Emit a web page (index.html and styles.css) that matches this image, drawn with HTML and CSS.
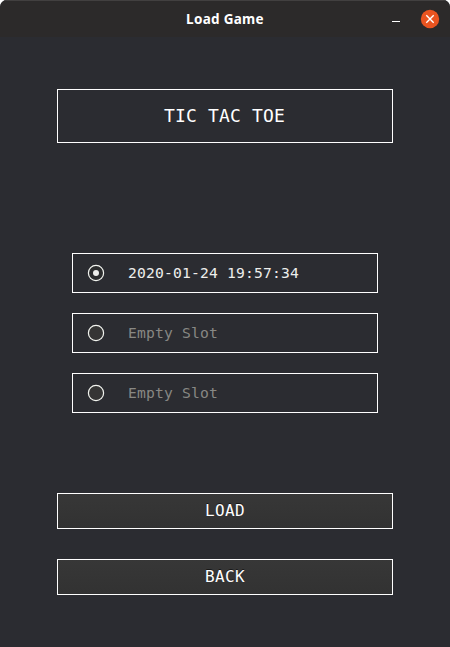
FILE: index.html
```html
<!DOCTYPE html>
<html lang="en">
<head>
<meta charset="utf-8">
<title>Load Game</title>
<link rel="stylesheet" href="styles.css">
</head>
<body>
<div class="window">
  <header class="titlebar">
    <div class="title"><span class="title-text">Load Game</span></div>
    <div class="controls">
      <svg class="minimize" width="8" height="20" viewBox="0 0 8 20"><path d="M0 12.5h8" stroke="#fff"/></svg>
      <svg class="close" width="20" height="20" viewBox="0 0 20 20"><circle cx="10" cy="10" r="9.2" fill="#e95420"/><path d="M6.3 6.3l7.4 7.4M13.7 6.3l-7.4 7.4" stroke="#fff" stroke-width="1.4"/></svg>
    </div>
  </header>
  <main class="content">
    <h1 class="banner">TIC TAC TOE</h1>
    <div class="slots">
      <div class="slot selected"><svg class="radio" width="18" height="18" viewBox="0 0 18 18"><circle cx="9" cy="9" r="7.6"/><circle class="dot" cx="9" cy="9" r="3"/></svg><span class="label">2020-01-24 19:57:34</span></div>
      <div class="slot"><svg class="radio" width="18" height="18" viewBox="0 0 18 18"><circle cx="9" cy="9" r="7.6"/></svg><span class="label">Empty Slot</span></div>
      <div class="slot"><svg class="radio" width="18" height="18" viewBox="0 0 18 18"><circle cx="9" cy="9" r="7.6"/></svg><span class="label">Empty Slot</span></div>
    </div>
    <div class="actions">
      <button class="button">LOAD</button>
      <button class="button">BACK</button>
    </div>
  </main>
</div>
</body>
</html>
```
FILE: styles.css
```css
* { box-sizing: border-box; }
body { margin: 0; background: #fff; }
.window {
  height: 647px;
  display: flex;
  flex-direction: column;
  overflow: hidden;
  border-radius: 7px 7px 0 0;
  background: #2b2c31;
}
.titlebar {
  height: 37px;
  display: grid;
  grid-template-columns: 1fr auto 1fr;
  align-items: center;
  background: #2c2a2a;
  border-top: 1px solid #424040;
}
.title {
  grid-column: 2;
  font: bold 13.5px/20px "Noto Sans", sans-serif;
  letter-spacing: 0.3px;
  color: #fff;
}
.controls {
  display: flex;
  justify-content: flex-end;
  gap: 20px;
  padding-right: 10px;
}
.content {
  flex: 1;
  display: flex;
  flex-direction: column;
  padding: 52px 57px 0;
  font-family: "DejaVu Sans Mono", monospace;
}
.banner {
  height: 54px;
  margin: 0;
  padding-right: 1px;
  border: 1px solid #fff;
  color: #fff;
  font-weight: normal;
  font-size: 18px;
  line-height: 52px;
  letter-spacing: 0.16px;
  text-align: center;
}
.slots {
  display: flex;
  flex-direction: column;
  gap: 20px;
  margin: 110px 15px 80px;
}
.slot {
  height: 40px;
  display: flex;
  align-items: center;
  gap: 23px;
  padding-left: 14px;
  border: 1px solid #fff;
  color: #888884;
  font-size: 14.67px;
  letter-spacing: 0.17px;
}
.label { line-height: 18px; }
.slot.selected { color: #eeeeec; }
.radio { fill: #353535; stroke: #f2f4ef; stroke-width: 1.2; }
.selected .radio { fill: #2b2c2d; }
.radio .dot { fill: #eeeeec; stroke: none; }
.actions {
  display: flex;
  flex-direction: column;
  gap: 30px;
}
.button {
  height: 36px;
  padding: 0;
  border: 1px solid #fff;
  border-radius: 0;
  background: linear-gradient(#373737, #323232);
  color: #fff;
  font: 16px/34px "DejaVu Sans Mono", monospace;
  letter-spacing: 0.37px;
  text-shadow: 0 -1px #181818;
}
```
